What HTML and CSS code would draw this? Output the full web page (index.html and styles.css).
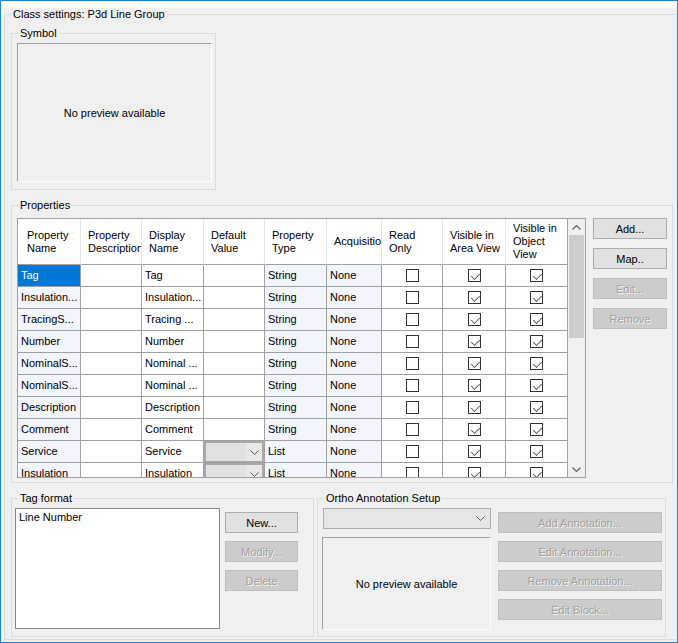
FILE: index.html
```html
<!DOCTYPE html>
<html>
<head>
<meta charset="utf-8">
<link rel="stylesheet" href="styles.css">
</head>
<body>
<div class="window">
  <div class="client">
    <div class="group outer">
      <span class="legend">Class settings: P3d Line Group</span>

      <div class="group symbol">
        <span class="legend">Symbol</span>
        <div class="preview sym-preview">No preview available</div>
      </div>

      <div class="group props">
        <span class="legend">Properties</span>
        <div class="props-body">
          <div class="gridwrap">
            <div class="grid">
              <div class="hcell first">Property<br>Name</div>
              <div class="hcell">Property<br>Description</div>
              <div class="hcell">Display<br>Name</div>
              <div class="hcell">Default<br>Value</div>
              <div class="hcell">Property<br>Type</div>
              <div class="hcell">Acquisition</div>
              <div class="hcell">Read<br>Only</div>
              <div class="hcell">Visible in<br>Area View</div>
              <div class="hcell">Visible in<br>Object<br>View</div>

              <div class="cell ro selected">Tag</div><div class="cell"></div><div class="cell">Tag</div><div class="cell"></div><div class="cell ro">String</div><div class="cell ro">None</div><div class="cell chk"><span class="cb"></span></div><div class="cell chk"><span class="cb on"></span></div><div class="cell chk"><span class="cb on"></span></div>

              <div class="cell ro">Insulation...</div><div class="cell"></div><div class="cell">Insulation...</div><div class="cell"></div><div class="cell ro">String</div><div class="cell ro">None</div><div class="cell chk"><span class="cb"></span></div><div class="cell chk"><span class="cb on"></span></div><div class="cell chk"><span class="cb on"></span></div>

              <div class="cell ro">TracingS...</div><div class="cell"></div><div class="cell">Tracing ...</div><div class="cell"></div><div class="cell ro">String</div><div class="cell ro">None</div><div class="cell chk"><span class="cb"></span></div><div class="cell chk"><span class="cb on"></span></div><div class="cell chk"><span class="cb on"></span></div>

              <div class="cell ro">Number</div><div class="cell"></div><div class="cell">Number</div><div class="cell"></div><div class="cell ro">String</div><div class="cell ro">None</div><div class="cell chk"><span class="cb"></span></div><div class="cell chk"><span class="cb on"></span></div><div class="cell chk"><span class="cb on"></span></div>

              <div class="cell ro">NominalS...</div><div class="cell"></div><div class="cell">Nominal ...</div><div class="cell"></div><div class="cell ro">String</div><div class="cell ro">None</div><div class="cell chk"><span class="cb"></span></div><div class="cell chk"><span class="cb on"></span></div><div class="cell chk"><span class="cb on"></span></div>

              <div class="cell ro">NominalS...</div><div class="cell"></div><div class="cell">Nominal ...</div><div class="cell"></div><div class="cell ro">String</div><div class="cell ro">None</div><div class="cell chk"><span class="cb"></span></div><div class="cell chk"><span class="cb on"></span></div><div class="cell chk"><span class="cb on"></span></div>

              <div class="cell ro">Description</div><div class="cell"></div><div class="cell">Description</div><div class="cell"></div><div class="cell ro">String</div><div class="cell ro">None</div><div class="cell chk"><span class="cb"></span></div><div class="cell chk"><span class="cb on"></span></div><div class="cell chk"><span class="cb on"></span></div>

              <div class="cell ro">Comment</div><div class="cell"></div><div class="cell">Comment</div><div class="cell"></div><div class="cell ro">String</div><div class="cell ro">None</div><div class="cell chk"><span class="cb"></span></div><div class="cell chk"><span class="cb on"></span></div><div class="cell chk"><span class="cb on"></span></div>

              <div class="cell ro">Service</div><div class="cell"></div><div class="cell">Service</div><div class="cell combo-cell"><span class="gcombo"><span class="gcombo-btn"><svg width="9" height="5" viewBox="0 0 9 5"><polyline points="0.5,0.5 4.5,4.5 8.5,0.5" fill="none" stroke="#606060" stroke-width="1"/></svg></span></span></div><div class="cell ro">List</div><div class="cell ro">None</div><div class="cell chk"><span class="cb"></span></div><div class="cell chk"><span class="cb on"></span></div><div class="cell chk"><span class="cb on"></span></div>

              <div class="cell ro">Insulation</div><div class="cell"></div><div class="cell">Insulation</div><div class="cell combo-cell"><span class="gcombo"><span class="gcombo-btn"><svg width="9" height="5" viewBox="0 0 9 5"><polyline points="0.5,0.5 4.5,4.5 8.5,0.5" fill="none" stroke="#606060" stroke-width="1"/></svg></span></span></div><div class="cell ro">List</div><div class="cell ro">None</div><div class="cell chk"><span class="cb"></span></div><div class="cell chk"><span class="cb on"></span></div><div class="cell chk"><span class="cb on"></span></div>
            </div>
            <div class="vscroll">
              <div class="sarrow"><svg width="9" height="5" viewBox="0 0 9 5"><polyline points="0.5,4.5 4.5,0.5 8.5,4.5" fill="none" stroke="#606060" stroke-width="1.2"/></svg></div>
              <div class="thumb"></div>
              <div class="strack"></div>
              <div class="sarrow"><svg width="9" height="5" viewBox="0 0 9 5"><polyline points="0.5,0.5 4.5,4.5 8.5,0.5" fill="none" stroke="#606060" stroke-width="1.2"/></svg></div>
            </div>
          </div>
          <div class="btncol">
            <div class="btn">Add...</div>
            <div class="btn">Map..</div>
            <div class="btn disabled">Edit...</div>
            <div class="btn disabled">Remove</div>
          </div>
        </div>
      </div>

      <div class="bottom-row">
        <div class="group tagfmt">
          <span class="legend">Tag format</span>
          <div class="tag-body">
            <div class="listbox">Line Number</div>
            <div class="btncol tagbtns">
              <div class="btn">New...</div>
              <div class="btn disabled">Modify...</div>
              <div class="btn disabled">Delete</div>
            </div>
          </div>
        </div>
        <div class="group ortho">
          <span class="legend">Ortho Annotation Setup</span>
          <div class="ortho-body">
            <div class="ortho-left">
              <div class="combo"><svg width="9" height="5" viewBox="0 0 9 5"><polyline points="0.5,0.5 4.5,4.5 8.5,0.5" fill="none" stroke="#606060" stroke-width="1"/></svg></div>
              <div class="preview ortho-preview">No preview available</div>
            </div>
            <div class="btncol orthobtns">
              <div class="btn disabled">Add Annotation...</div>
              <div class="btn disabled">Edit Annotation...</div>
              <div class="btn disabled">Remove Annotation...</div>
              <div class="btn disabled">Edit Block...</div>
            </div>
          </div>
        </div>
      </div>
    </div>
  </div>
</div>
</body>
</html>
```

FILE: styles.css
```css
* { box-sizing: border-box; }
html, body { margin: 0; padding: 0; }
body {
  font-family: "Liberation Sans", Arial, sans-serif;
  font-size: 11px;
  color: #000;
  background: #f0f0f0;
}
.window {
  width: 678px;
  height: 643px;
  border: 1px solid #1883d7;
  background: #fff;
  padding: 7px 0 0 2px;
  overflow: hidden;
}
.client {
  width: 674px;
  height: 634px;
  background: #f0f0f0;
  overflow: hidden;
}
.group {
  position: relative;
  border: 1px solid #dcdcdc;
}
.legend {
  position: absolute;
  top: -7px;
  left: 6px;
  padding: 0 2px;
  line-height: 13px;
  background: #f0f0f0;
  white-space: nowrap;
}
.outer {
  margin: 6px 0 0 1px;
  width: 690px;
  height: 626px;
  padding: 18px 0 0 6px;
}
.symbol {
  width: 205px;
  height: 157px;
  padding: 9px 0 0 5px;
}
.preview {
  border-top: 1px solid #a0a0a0;
  border-left: 1px solid #a0a0a0;
  border-right: 1px solid #fff;
  border-bottom: 1px solid #fff;
  display: flex;
  align-items: center;
  justify-content: center;
  background: #f0f0f0;
}
.sym-preview {
  width: 195px;
  height: 139px;
}
.props {
  margin-top: 15px;
  width: 662px;
  height: 278px;
}
.props-body {
  display: flex;
  padding: 12px 0 0 5px;
}
.gridwrap {
  display: flex;
  width: 569px;
  height: 260px;
  border: 1px solid #a0a0a0;
  background: #fff;
}
.grid {
  width: 550px;
  height: 258px;
  overflow: hidden;
  display: grid;
  grid-template-columns: 63px 61px 62px 61px 62px 55px 61px 63px 62px;
  grid-template-rows: 46px;
  grid-auto-rows: 22px;
}
.hcell {
  background: #fff;
  border-right: 1px solid #e5e5e5;
  border-bottom: 1px solid #a0a0a0;
  display: flex;
  align-items: center;
  padding-left: 7px;
  line-height: 13px;
  white-space: nowrap;
  overflow: hidden;
}
.hcell:nth-child(9) { border-right-color: #a0a0a0; }
.hcell.first { padding-left: 9px; }
.cell {
  background: #fff;
  border-right: 1px solid #a0a0a0;
  border-bottom: 1px solid #a0a0a0;
  padding-left: 3px;
  line-height: 21px;
  white-space: nowrap;
  overflow: hidden;
}
.cell.ro { background: #f2f5fb; }
.cell.selected { background: #0078d7; color: #fff; }
.cell.chk {
  display: flex;
  align-items: center;
  justify-content: center;
  padding-left: 0;
}
.cb {
  width: 13px;
  height: 13px;
  border: 1px solid #333;
  background: #fff;
  position: relative;
}
.cb.on::after {
  content: "";
  position: absolute;
  left: 2px;
  top: 1px;
  width: 7px;
  height: 4px;
  border-left: 1px solid #5a5a5a;
  border-bottom: 1px solid #5a5a5a;
  transform: translate(0.5px, 2px) rotate(-45deg);
}
.combo-cell {
  padding: 0;
  border-right-color: #a0a0a0;
}
.gcombo {
  display: flex;
  justify-content: flex-end;
  height: 21px;
  border: 2px solid #a8a8a8;
  border-bottom-width: 1px;
  background: #e1e1e1;
}
.gcombo-btn {
  width: 16px;
  display: flex;
  align-items: center;
  justify-content: center;
  background: #e8e8e8;
}
.vscroll {
  width: 17px;
  height: 258px;
  background: #f0f0f0;
  display: flex;
  flex-direction: column;
  align-items: center;
}
.sarrow {
  width: 17px;
  height: 16px;
  display: flex;
  align-items: center;
  justify-content: center;
  flex: none;
}
.thumb {
  width: 15px;
  height: 103px;
  background: #cdcdcd;
  flex: none;
}
.strack { flex: 1; }
.btncol {
  display: flex;
  flex-direction: column;
  gap: 9px;
  margin-left: 7px;
}
.btn {
  width: 74px;
  height: 21px;
  border: 1px solid #adadad;
  background: #e1e1e1;
  display: flex;
  align-items: center;
  justify-content: center;
  white-space: nowrap;
}
.btn.disabled {
  background: #cccccc;
  border-color: #bfbfbf;
  color: #a0a0a0;
  text-shadow: 1px 1px 0 #f4f4f4;
}
.bottom-row {
  display: flex;
  gap: 3px;
  margin-top: 15px;
}
.tagfmt {
  width: 303px;
  height: 139px;
}
.tag-body {
  display: flex;
  padding: 9px 0 0 3px;
}
.listbox {
  width: 205px;
  height: 121px;
  border: 1px solid #828790;
  background: #fff;
  padding: 1px 0 0 3px;
  line-height: 15px;
}
.tagbtns {
  margin: 4px 0 0 5px;
  gap: 8px;
}
.tagbtns .btn { width: 73px; }
.ortho {
  width: 349px;
  height: 139px;
}
.ortho-body {
  display: flex;
  padding: 9px 0 0 4px;
}
.ortho-left {
  display: flex;
  flex-direction: column;
  gap: 8px;
}
.combo {
  margin-left: 1px;
  width: 168px;
  height: 21px;
  border: 1px solid #adadad;
  background: #e5e5e5;
  display: flex;
  align-items: center;
  justify-content: flex-end;
  padding-right: 5px;
}
.ortho-preview {
  width: 169px;
  height: 93px;
}
.orthobtns {
  margin: 4px 0 0 7px;
  gap: 8px;
}
.orthobtns .btn { width: 164px; }
```
